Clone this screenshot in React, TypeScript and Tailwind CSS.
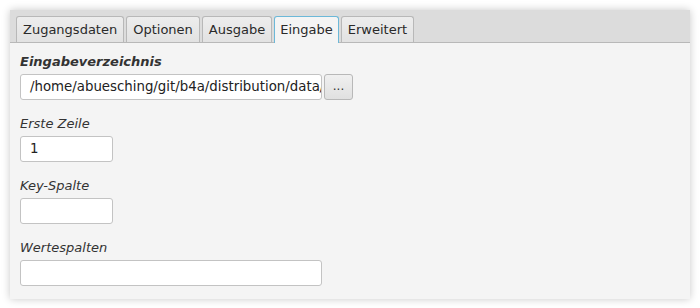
import React from "react";

const font = { fontFamily: '"DejaVu Sans", sans-serif' };

function Tab({ label, active }: { label: string; active?: boolean }) {
  return (
    <div
      className={
        active
          ? "h-[27px] px-[5px] flex items-center border border-b-0 border-[#6cb8d8] bg-[#f4f4f4] rounded-t-[3px] text-[13px] text-[#2a2a2a] -mb-px"
          : "h-[26px] px-[6px] flex items-center border border-b-0 border-[#b8b8b8] bg-gradient-to-b from-[#ededed] to-[#e2e2e2] rounded-t-[3px] text-[13px] text-[#2a2a2a]"
      }
    >
      {label}
    </div>
  );
}

function Field({
  label,
  width,
  value,
  bold,
  button,
}: {
  label: string;
  width: string;
  value?: string;
  bold?: boolean;
  button?: boolean;
}) {
  return (
    <div className="flex flex-col mb-[16px] shrink-0">
      <div
        className={
          bold
            ? "h-[16px] leading-[16px] italic font-bold text-[13px] text-[#333] mb-[4px]"
            : "h-[16px] leading-[16px] italic text-[13px] text-[#333] mb-[4px]"
        }
      >
        {label}
      </div>
      <div className="flex items-center gap-[2px]">
        <div
          className={`${width} h-[26px] bg-white border border-[#c3c3c3] rounded-[3px] pl-[9px] pr-[3px] flex items-center overflow-hidden whitespace-nowrap text-[13.33px] text-[#222]`}
        >
          {value}
        </div>
        {button && (
          <div className="w-[29px] h-[26px] border border-[#b8b8b8] rounded-[3px] bg-gradient-to-b from-[#f0f0f0] to-[#e0e0e0] flex items-center justify-center text-[12px] text-[#333] pb-[3px]">
            ...
          </div>
        )}
      </div>
    </div>
  );
}

export default function App() {
  return (
    <div className="w-[700px] h-[308px] bg-white p-[10px]" style={font}>
      <div className="w-[680px] h-[289px] bg-[#f4f4f4] shadow-[0_0_8px_rgba(0,0,0,0.22)] flex flex-col overflow-hidden">
        <div className="h-[33px] shrink-0 bg-[#dcdcdc] border-b border-[#b8b8b8] flex items-end pl-[6px] gap-[2px]">
          <Tab label="Zugangsdaten" />
          <Tab label="Optionen" />
          <Tab label="Ausgabe" />
          <Tab label="Eingabe" active />
          <Tab label="Erweitert" />
        </div>
        <div className="pt-[11px] pl-[10px] flex flex-col">
          <Field
            label="Eingabeverzeichnis"
            bold
            width="w-[302px]"
            value="/home/abuesching/git/b4a/distribution/data/"
            button
          />
          <Field label="Erste Zeile" width="w-[93px]" value="1" />
          <Field label="Key-Spalte" width="w-[93px]" />
          <Field label="Wertespalten" width="w-[302px]" />
        </div>
      </div>
    </div>
  );
}
